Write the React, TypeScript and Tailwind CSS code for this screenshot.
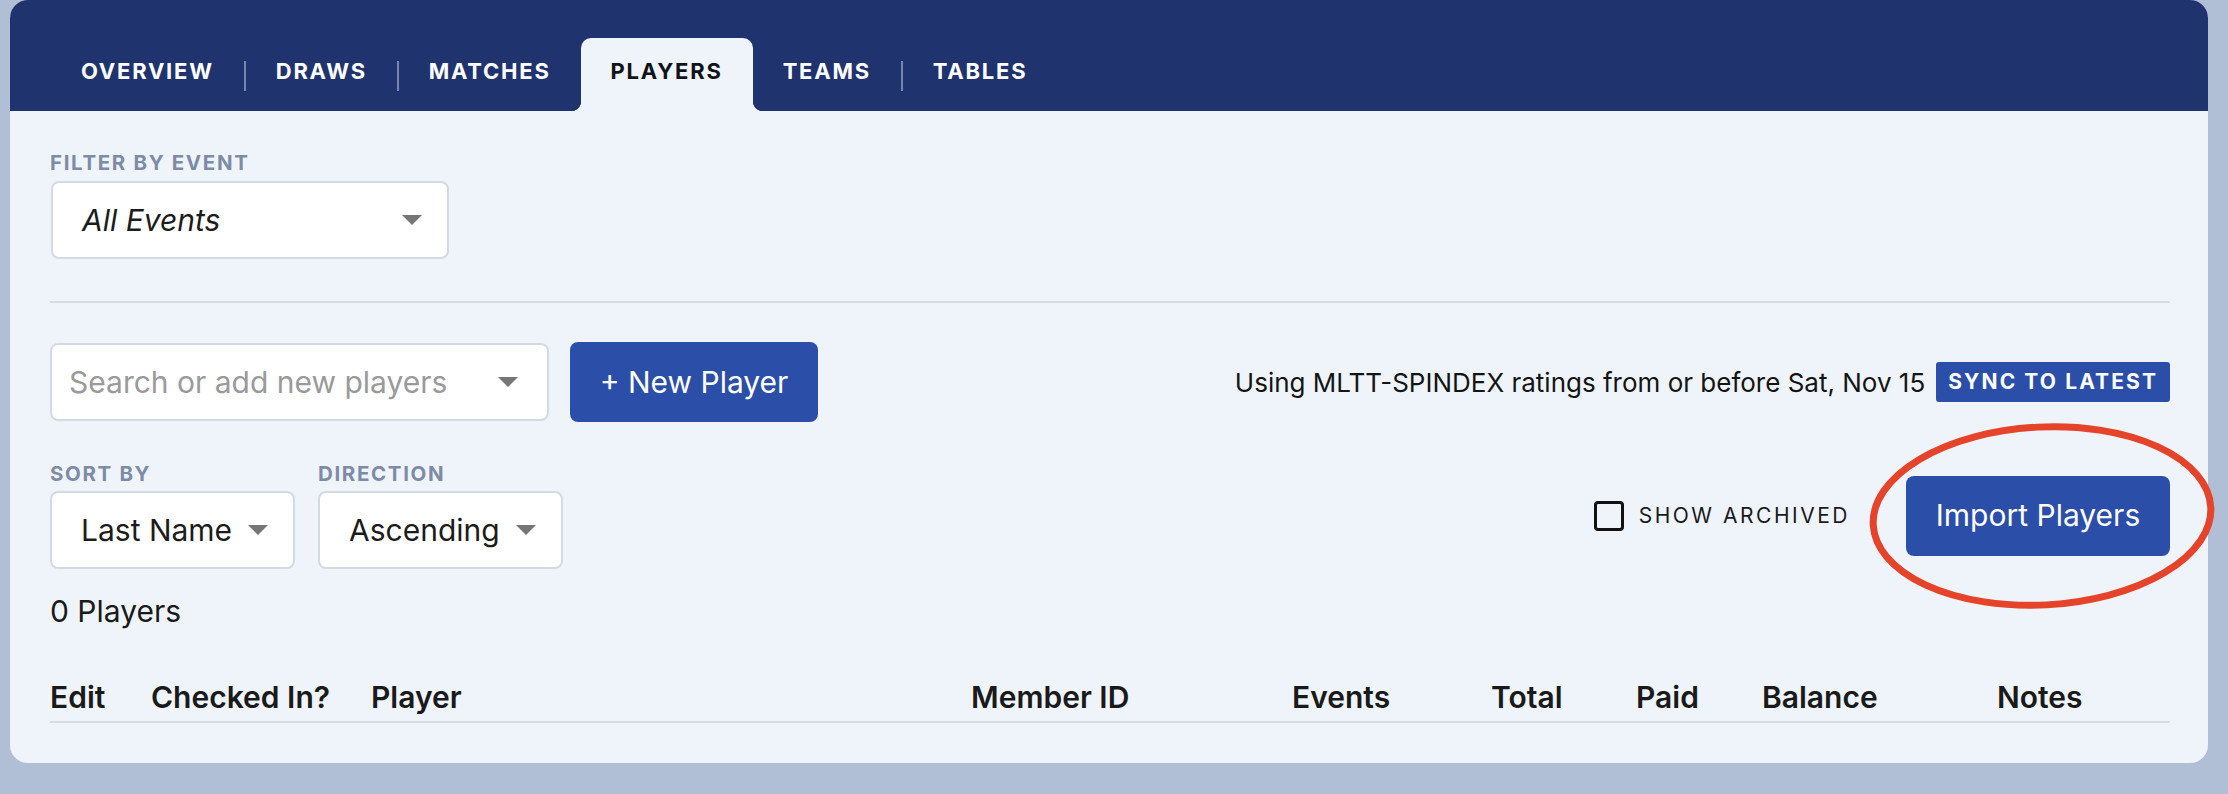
import React from 'react';

const tabs = ['Overview', 'Draws', 'Matches', 'Players', 'Teams', 'Tables'];
const activeTab = 'Players';

const columns = ['Edit', 'Checked In?', 'Player', 'Member ID', 'Events', 'Total', 'Paid', 'Balance', 'Notes'];

function Caret() {
  return (
    <svg viewBox="0 0 20 10" className="w-[20px] h-[10px] shrink-0">
      <polygon points="0,0 20,0 10,10" fill="#767676" />
    </svg>
  );
}

function Label({ children }: { children: React.ReactNode }) {
  return (
    <div className="text-[20.5px] leading-[24px] font-bold tracking-[0.08em] uppercase text-[#7e8ba6]">
      {children}
    </div>
  );
}

function SelectBox({ value, width, italic }: { value: string; width: string; italic?: boolean }) {
  return (
    <div
      className={`${width} h-[78px] bg-white border-2 border-[#d4dae4] rounded-[8px] flex items-center justify-between pl-[29px] pr-[25px]`}
    >
      <span className={`text-[30px] text-[#1c1c1c] ${italic ? 'italic' : ''}`}>{value}</span>
      <Caret />
    </div>
  );
}

export default function App() {
  return (
    <div className="relative w-[2228px] h-[794px] bg-[#b0bfd6] font-['Inter',sans-serif] overflow-hidden">
      <div className="ml-[10px] w-[2198px] h-[763px] bg-[#eff4fb] rounded-[18px] overflow-hidden">
        {/* Tab bar */}
        <div className="h-[111px] bg-[#1f336e] flex items-end pl-[41px]">
          {tabs.map((t, i) => {
            const isActive = t === activeTab;
            const showSep = i > 0 && !isActive && tabs[i - 1] !== activeTab;
            return (
              <React.Fragment key={t}>
                {showSep && <div className="w-[2px] h-[30px] bg-[#7586ad] mb-[20px]" />}
                <div
                  className={`relative h-[73px] px-[30px] pb-[6px] flex items-center text-[22px] font-bold tracking-[0.08em] uppercase ${
                    isActive ? 'bg-[#eff4fb] text-[#111318] rounded-t-[10px]' : 'text-white'
                  }`}
                >
                  {t}
                  {isActive && (
                    <>
                      <span className="absolute bottom-0 left-[-10px] w-[10px] h-[10px] bg-[radial-gradient(circle_at_0_0,transparent_10px,#eff4fb_10.5px)]" />
                      <span className="absolute bottom-0 right-[-10px] w-[10px] h-[10px] bg-[radial-gradient(circle_at_100%_0,transparent_10px,#eff4fb_10.5px)]" />
                    </>
                  )}
                </div>
              </React.Fragment>
            );
          })}
        </div>

        {/* Content */}
        <div className="pl-[40px] pr-[38px] pt-[40px]">
          <Label>Filter by event</Label>
          <div className="mt-[6px] ml-[1px]">
            <SelectBox value="All Events" width="w-[398px]" italic />
          </div>

          <div className="mt-[42px] h-[2px] bg-[#d5dbe4]" />

          <div className="mt-[39px] h-[80px] flex items-center">
            <div className="w-[499px] h-[78px] bg-white border-2 border-[#d4dae4] rounded-[8px] flex items-center justify-between pl-[17px] pr-[29px]">
              <span className="text-[30px] text-[#9a9a9a]">Search or add new players</span>
              <Caret />
            </div>
            <button className="ml-[21px] w-[248px] h-[80px] rounded-[8px] bg-[#2b4ea8] text-white text-[30px]">
              + New Player
            </button>
            <div className="ml-auto flex items-center gap-[11px]">
              <span className="text-[26px] text-[#141414]">Using MLTT-SPINDEX ratings from or before Sat, Nov 15</span>
              <span className="h-[40px] px-[12px] flex items-center rounded-[3px] bg-[#2b4ea8] text-white text-[21px] font-bold tracking-[0.1em] uppercase">
                Sync to latest
              </span>
            </div>
          </div>

          <div className="mt-[40px] flex items-center">
            <div className="flex gap-[23px]">
              <div>
                <Label>Sort by</Label>
                <div className="mt-[5px]">
                  <SelectBox value="Last Name" width="w-[245px]" />
                </div>
              </div>
              <div>
                <Label>Direction</Label>
                <div className="mt-[5px]">
                  <SelectBox value="Ascending" width="w-[245px]" />
                </div>
              </div>
            </div>
            <div className="ml-auto flex items-center">
              <div className="w-[30px] h-[30px] border-[3px] border-[#111] rounded-[4px]" />
              <span className="ml-[15px] text-[21px] tracking-[0.12em] uppercase text-[#1a1a1a]">Show archived</span>
              <button className="ml-[56px] w-[264px] h-[80px] rounded-[8px] bg-[#2b4ea8] text-white text-[30px]">
                Import Players
              </button>
            </div>
          </div>

          <div className="mt-[24px] text-[30px] leading-[36px] text-[#1a1a1a]">0 Players</div>

          <div className="mt-[50px] grid grid-cols-[101px_220px_600px_321px_199px_145px_126px_235px_1fr] pb-[6px] border-b-2 border-[#d5dbe4] text-[30px] leading-[36px] font-semibold text-[#1a1a1a]">
            {columns.map((c) => (
              <div key={c}>{c}</div>
            ))}
          </div>
        </div>
      </div>

      {/* Annotation circle */}
      <svg className="absolute left-[1862px] top-[418px] w-[360px] h-[196px]" viewBox="0 0 360 196">
        <ellipse cx="180" cy="98" rx="169" ry="89" fill="none" stroke="#e5432a" strokeWidth="7" transform="rotate(-3 180 98)" />
      </svg>
    </div>
  );
}
